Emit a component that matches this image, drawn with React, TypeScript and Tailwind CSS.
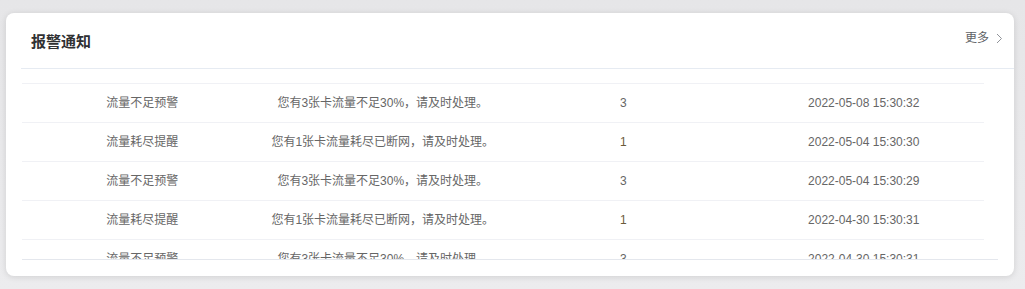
const rows = [
  { type: "流量不足预警", msg: "您有3张卡流量不足30%，请及时处理。", count: 3, time: "2022-05-08 15:30:32" },
  { type: "流量耗尽提醒", msg: "您有1张卡流量耗尽已断网，请及时处理。", count: 1, time: "2022-05-04 15:30:30" },
  { type: "流量不足预警", msg: "您有3张卡流量不足30%，请及时处理。", count: 3, time: "2022-05-04 15:30:29" },
  { type: "流量耗尽提醒", msg: "您有1张卡流量耗尽已断网，请及时处理。", count: 1, time: "2022-04-30 15:30:31" },
  { type: "流量不足预警", msg: "您有3张卡流量不足30%，请及时处理。", count: 3, time: "2022-04-30 15:30:31" },
];

export default function App() {
  return (
    <div
      className="w-[1025px] h-[289px] bg-gradient-to-b from-[#e6e6e8] to-[#ececee] pt-[13px] pl-[6px]"
      style={{ fontFamily: '"Liberation Sans", "Noto Sans CJK SC", sans-serif' }}
    >
      <div className="w-[1008px] h-[263px] bg-white rounded-[8px] shadow-[0_1px_6px_rgba(0,0,0,0.12)] pl-[15px] flex flex-col">
        <div className="h-[56px] flex items-center justify-between border-b border-[#e6ebf2] pl-[10px] pr-[11px]">
          <h1 className="text-[15px] font-bold text-[#303133] mt-[3px]">报警通知</h1>
          <div className="flex items-center gap-[7px] text-[12px] text-[#606266] -mt-[5px]">
            <span>更多</span>
            <svg width="7" height="11" viewBox="0 0 7 11" fill="none">
              <path d="M1 1l4.5 4.5L1 10" stroke="#909399" strokeWidth="1" />
            </svg>
          </div>
        </div>
        <div className="ml-[1px] w-[976px] h-[191px] overflow-hidden border-b border-[#e4e7ed] pt-[14px]">
          <div className="w-[962px]">
            {rows.map((r, i) => (
              <div
                key={i}
                className="grid grid-cols-4 h-[39px] items-center border-t border-[#f0f1f5] text-[12px] text-[#666666] text-center"
              >
                <span>{r.type}</span>
                <span>{r.msg}</span>
                <span className={r.count === 1 ? "text-[#6b5a3a]" : ""}>{r.count}</span>
                <span>{r.time}</span>
              </div>
            ))}
          </div>
        </div>
      </div>
    </div>
  );
}
